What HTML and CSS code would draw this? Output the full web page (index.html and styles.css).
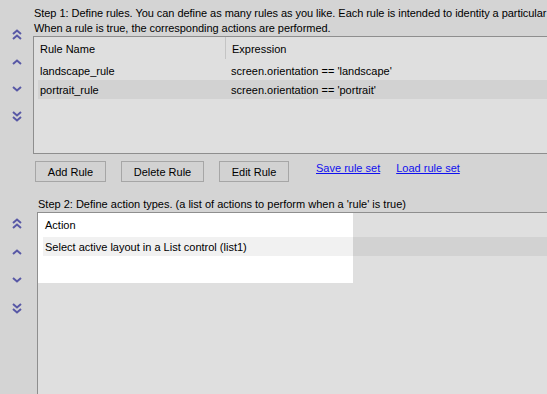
FILE: index.html
```html
<!DOCTYPE html>
<html>

<head>
  <title>Rules</title>
  <link rel="stylesheet" href="styles.css">
</head>

<body>
  <div class="page">

    <!-- Step 1: rules -->
    <section class="step step-rules">
      <div class="movers">
        <svg class="mover" viewBox="0 0 12 12"><polyline points="2,5 6,1.5 10,5" /><polyline points="2,10 6,6.5 10,10" /></svg>
        <svg class="mover" viewBox="0 0 12 12"><polyline points="2,8 6,4.5 10,8" /></svg>
        <svg class="mover" viewBox="0 0 12 12"><polyline points="2,4 6,7.5 10,4" /></svg>
        <svg class="mover" viewBox="0 0 12 12"><polyline points="2,2 6,5.5 10,2" /><polyline points="2,7 6,10.5 10,7" /></svg>
      </div>
      <div class="step-body">
        <p class="intro">Step 1: Define rules. You can define as many rules as you like. Each rule is intended to identity a particular<br>When a rule is true, the corresponding actions are performed.</p>
        <div class="grid rules-grid">
          <div class="grid-row grid-head">
            <span class="cell col-name">Rule Name</span>
            <span class="cell col-expr">Expression</span>
          </div>
          <div class="grid-row">
            <span class="cell col-name">landscape_rule</span>
            <span class="cell col-expr">screen.orientation == 'landscape'</span>
          </div>
          <div class="grid-row selected">
            <span class="cell col-name">portrait_rule</span>
            <span class="cell col-expr">screen.orientation == 'portrait'</span>
          </div>
        </div>
        <div class="toolbar">
          <button class="btn btn-add">Add Rule</button>
          <button class="btn btn-delete">Delete Rule</button>
          <button class="btn btn-edit">Edit Rule</button>
          <a href="#" class="link">Save rule set</a>
          <a href="#" class="link">Load rule set</a>
        </div>
      </div>
    </section>

    <!-- Step 2: actions -->
    <section class="step step-actions">
      <div class="movers">
        <svg class="mover" viewBox="0 0 12 12"><polyline points="2,5 6,1.5 10,5" /><polyline points="2,10 6,6.5 10,10" /></svg>
        <svg class="mover" viewBox="0 0 12 12"><polyline points="2,8 6,4.5 10,8" /></svg>
        <svg class="mover" viewBox="0 0 12 12"><polyline points="2,4 6,7.5 10,4" /></svg>
        <svg class="mover" viewBox="0 0 12 12"><polyline points="2,2 6,5.5 10,2" /><polyline points="2,7 6,10.5 10,7" /></svg>
      </div>
      <div class="step-body">
        <p class="intro intro-actions">Step 2: Define action types. (a list of actions to perform when a 'rule' is true)</p>
        <div class="grid actions-grid">
          <div class="grid-row grid-head">
            <span class="cell">Action</span>
          </div>
          <div class="grid-row selected">
            <span class="cell">Select active layout in a List control (list1)</span>
          </div>
        </div>
      </div>
    </section>

  </div>
</body>

</html>
```

FILE: styles.css
```css
/* Reset */
body,
p,
button {
  margin: 0;
  padding: 0;
}

body {
  font-family: 'Liberation Sans', Arial, sans-serif;
  font-size: 11px;
  color: #000;
  background-color: #d4d4d4;
  overflow: hidden;
}

.page {
  display: flex;
  flex-direction: column;
  height: 394px;
}

.step {
  display: flex;
}

.step-actions {
  flex: 1;
}

/* Up / down arrows on the left */
.movers {
  width: 33px;
  flex: none;
  display: flex;
  flex-direction: column;
  align-items: center;
}

.step-rules .movers {
  padding-top: 29px;
  gap: 15px;
}

.step-actions .movers {
  padding-top: 36px;
  gap: 16px;
}

.mover {
  display: block;
  width: 12px;
  height: 12px;
  fill: none;
  stroke: #5858a6;
  stroke-width: 2;
}

.step-body {
  flex: 1;
  min-width: 0;
  display: flex;
  flex-direction: column;
}

.intro {
  line-height: 15px;
  padding-top: 6px;
  padding-left: 1px;
  white-space: nowrap;
  letter-spacing: -0.05px;
}

.intro-actions {
  padding-top: 15px;
  padding-left: 5px;
  letter-spacing: 0;
}

/* List boxes */
.grid {
  background-color: #dfdfdf;
  border-top: 1px solid #8e8e8e;
  border-left: 1px solid #8e8e8e;
}

.rules-grid {
  height: 116px;
  border-bottom: 1px solid #8e8e8e;
  padding-left: 4px;
}

.actions-grid {
  flex: 1;
  margin-left: 4px;
  padding-left: 5px;
  /* white panel behind the list */
  background: linear-gradient(#fff, #fff) 0 0 / 315px 70px no-repeat, #dfdfdf;
}

.grid-row {
  display: flex;
  height: 19px;
  line-height: 19px;
}

.grid-row.grid-head {
  height: 24px;
  line-height: 23px;
}

.grid-row.selected {
  background-color: rgba(0, 0, 0, 0.055);
}

.cell {
  padding-left: 2px;
  padding-top: 1px;
  white-space: nowrap;
}

.col-name {
  width: 185px;
  flex: none;
}

.col-expr {
  padding-left: 6px;
}

.grid-head .col-expr {
  border-left: 1px solid #c4c4c4;
  height: 22px;
  padding-top: 0;
  line-height: 24px;
}

/* Buttons and links under the rules */
.toolbar {
  display: flex;
  align-items: flex-start;
  margin-top: 7px;
  padding-left: 2px;
}

.btn {
  font-family: inherit;
  font-size: 11px;
  height: 21px;
  background-color: #d2d2d2;
  border: 1px solid #a6a6a6;
  color: #000;
  margin-right: 15px;
}

.btn-add {
  width: 71px;
}

.btn-delete {
  width: 83px;
}

.btn-edit {
  width: 70px;
  margin-right: 27px;
}

.link {
  color: #1010ee;
  line-height: 15px;
  margin-right: 16px;
}
```
